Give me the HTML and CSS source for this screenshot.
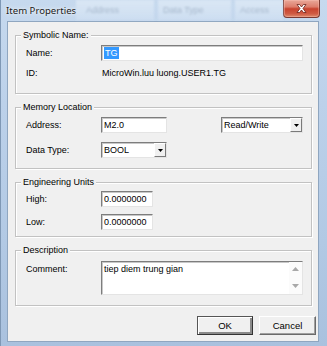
FILE: index.html
```html
<!DOCTYPE html>
<html>
<head>
<meta charset="utf-8">
<title>Item Properties</title>
<link rel="stylesheet" href="styles.css">
</head>
<body>
<div class="window">
  <div class="titlebar">
    <span class="title">Item Properties</span>
    <div class="ghosts">
      <span class="ghost g1">Address</span>
      <span class="ghost g2">Data Type</span>
      <span class="ghost g3">Access</span>
    </div>
    <div class="close">
      <svg width="11" height="9" viewBox="0 0 11 9"><path d="M1 0.5h2.6L5.5 3l1.9-2.5H10L7 4.5l3 4H7.4L5.5 6 3.6 8.5H1l3-4z" fill="#fff" stroke="#6b2219" stroke-width="0.8" stroke-linejoin="round"/></svg>
    </div>
  </div>
  <div class="client">
    <fieldset class="grp grp-sym">
      <legend>Symbolic Name:</legend>
      <div class="row">
        <span class="lbl">Name:</span>
        <div class="edit w-name"><span class="sel">TG</span></div>
      </div>
      <div class="row row-id">
        <span class="lbl">ID:</span>
        <span class="val">MicroWin.luu luong.USER1.TG</span>
      </div>
    </fieldset>

    <fieldset class="grp grp-mem">
      <legend>Memory Location</legend>
      <div class="row">
        <span class="lbl">Address:</span>
        <div class="edit w-addr">M2.0</div>
        <div class="combo w-rw">
          <span class="ctext">Read/Write</span>
          <span class="cbtn"><svg width="5" height="3" viewBox="0 0 5 3"><path d="M0 0h5L2.5 3z" fill="#000"/></svg></span>
        </div>
      </div>
      <div class="row row-dt">
        <span class="lbl">Data Type:</span>
        <div class="combo w-dt">
          <span class="ctext">BOOL</span>
          <span class="cbtn"><svg width="5" height="3" viewBox="0 0 5 3"><path d="M0 0h5L2.5 3z" fill="#000"/></svg></span>
        </div>
      </div>
    </fieldset>

    <fieldset class="grp grp-eng">
      <legend>Engineering Units</legend>
      <div class="row">
        <span class="lbl">High:</span>
        <div class="edit w-num">0.0000000</div>
      </div>
      <div class="row row-low">
        <span class="lbl">Low:</span>
        <div class="edit w-num">0.0000000</div>
      </div>
    </fieldset>

    <fieldset class="grp grp-desc">
      <legend>Description</legend>
      <div class="row row-memo">
        <span class="lbl lbl-memo">Comment:</span>
        <div class="memo">
          <span class="memo-text">tiep diem trung gian</span>
          <div class="vscroll">
            <svg width="7" height="4" viewBox="0 0 7 4"><path d="M0 4L3.5 0 7 4z" fill="#a8a8a8"/></svg>
            <svg width="7" height="4" viewBox="0 0 7 4"><path d="M0 0h7L3.5 4z" fill="#a8a8a8"/></svg>
          </div>
        </div>
      </div>
    </fieldset>

    <div class="buttons">
      <div class="btn btn-default"><span>OK</span></div>
      <div class="btn"><span>Cancel</span></div>
    </div>
  </div>
</div>
</body>
</html>
```

FILE: styles.css
```css
html, body {
  margin: 0;
  padding: 0;
}
body {
  width: 327px;
  height: 346px;
  overflow: hidden;
  background: #b8cde6;
  font-family: "Liberation Sans", Arial, sans-serif;
  font-size: 9px;
  color: #000;
}
.window {
  width: 327px;
  height: 346px;
  box-sizing: border-box;
  display: flex;
  flex-direction: column;
  padding-bottom: 4px;
  background: linear-gradient(180deg, #c6d9ee 0%, #bcd1ea 30%, #b2c9e4 70%, #a9c1de 100%);
  border-left: 1px solid #7f98b5;
}
.titlebar {
  height: 21px;
  flex-shrink: 0;
  display: flex;
  align-items: flex-start;
  padding: 0 7px 0 5px;
}
.title {
  width: 70px;
  flex-shrink: 0;
  font-family: "Noto Sans", "Liberation Sans", sans-serif;
  font-size: 9.6px;
  line-height: 22px;
  color: #1a1a1a;
  white-space: nowrap;
  text-shadow: 0 0 5px rgba(255,255,255,0.9), 0 0 2px rgba(255,255,255,0.8);
}
.ghosts {
  display: flex;
  height: 20px;
  gap: 4px;
}
.ghost {
  display: block;
  height: 20px;
  line-height: 21px;
  font-size: 9px;
  color: rgba(95,115,140,0.4);
  filter: blur(0.9px);
  background: linear-gradient(180deg, rgba(235,243,251,0.55) 0%, rgba(215,229,245,0.5) 100%);
  white-space: nowrap;
  box-sizing: border-box;
}
.g1 { width: 78px; padding-left: 10px; }
.g2 { width: 73px; padding-left: 5px; }
.g3 { width: 48px; padding-left: 5px; }
.close {
  margin-left: auto;
  width: 39px;
  height: 18px;
  box-sizing: border-box;
  border: 1px solid #7a3a32;
  border-top: none;
  border-radius: 0 0 4px 4px;
  background: linear-gradient(180deg, #e9a899 0%, #dd7e6c 40%, #c8432e 52%, #cf5a42 80%, #dd8a6c 100%);
  display: flex;
  align-items: center;
  justify-content: center;
  box-shadow: inset 0 0 0 1px rgba(255,200,190,0.35);
}
.client {
  flex: 1;
  margin: 0 8px 0 6px;
  background: #f0f0f0;
  border: 1px solid #8fa6c0;
  display: flex;
  flex-direction: column;
  padding: 7px 6px 0 7px;
}
.grp {
  margin: 0;
  padding: 0;
  min-width: 0;
  border: 1px solid #c2c2c2;
  box-shadow: 1px 1px 0 #fff, inset 1px 1px 0 #fff;
}
.grp legend {
  margin-left: 5px;
  padding: 0 2px;
  line-height: 13px;
  font-size: 9px;
  background: #f0f0f0;
}
.grp-sym { padding: 3px 0 12px 0; }
.grp-mem { margin-top: 7px; padding: 3px 0 10px 0; }
.grp-eng { margin-top: 7px; padding: 2px 0 6px 0; }
.grp-desc { margin-top: 7px; padding: 4px 0 10px 0; }

.row {
  display: flex;
  align-items: center;
  height: 16px;
  padding-left: 10px;
  padding-right: 8px;
}
.row-id { margin-top: 4px; }
.row-dt { margin-top: 9px; }
.row-low { margin-top: 7px; }
.row-memo { height: 34px; align-items: flex-start; }
.lbl {
  width: 75px;
  flex-shrink: 0;
  white-space: nowrap;
}
.lbl-memo { margin-top: 3px; }
.val { white-space: nowrap; padding-left: 1px; }

.edit {
  box-sizing: border-box;
  height: 16px;
  background: #fff;
  border: 1px solid;
  border-color: #7d7d7d #e4e4e4 #e4e4e4 #7d7d7d;
  box-shadow: inset 1px 1px 0 #c8c8c8;
  padding-left: 2px;
  line-height: 14px;
  white-space: nowrap;
}
.w-name { width: 202px; }
.w-addr { width: 66px; }
.w-num { width: 52px; }
.sel {
  display: inline-block;
  background: #3399ff;
  color: #fff;
  padding: 0 1px;
  line-height: 12px;
}

.combo {
  box-sizing: border-box;
  height: 16px;
  background: #fff;
  border: 1px solid;
  border-color: #7d7d7d #e4e4e4 #e4e4e4 #7d7d7d;
  box-shadow: inset 1px 1px 0 #c8c8c8;
  display: flex;
  align-items: stretch;
}
.w-rw { width: 82px; margin-left: auto; }
.w-dt { width: 66px; }
.ctext {
  flex: 1;
  padding-left: 2px;
  line-height: 14px;
  white-space: nowrap;
}
.cbtn {
  width: 12px;
  box-sizing: border-box;
  background: #f0f0f0;
  border: 1px solid;
  border-color: #ffffff #7a7a7a #7a7a7a #ffffff;
  display: flex;
  align-items: center;
  justify-content: center;
}

.memo {
  box-sizing: border-box;
  width: 202px;
  height: 34px;
  background: #fff;
  border: 1px solid;
  border-color: #7d7d7d #e4e4e4 #e4e4e4 #7d7d7d;
  box-shadow: inset 1px 1px 0 #c8c8c8;
  display: flex;
}
.memo-text {
  flex: 1;
  padding: 1px 0 0 2px;
  line-height: 12px;
  white-space: nowrap;
}
.vscroll {
  width: 13px;
  display: flex;
  flex-direction: column;
  align-items: center;
  justify-content: space-between;
  padding: 5px 0 6px 0;
  background: #fbfbfb;
}

.buttons {
  display: flex;
  justify-content: flex-end;
  gap: 6px;
  margin-top: 10px;
  margin-right: -4px;
}
.btn {
  box-sizing: border-box;
  width: 57px;
  height: 19px;
  background: #f0f0f0;
  border: 1px solid;
  border-color: #ffffff #6a6a6a #6a6a6a #ffffff;
  box-shadow: inset -1px -1px 0 #a0a0a0;
  display: flex;
  align-items: center;
  justify-content: center;
  font-size: 9.5px;
}
.btn-default {
  width: 56px;
  border-color: #555 #333 #333 #555;
  box-shadow: inset 1px 1px 0 #fff, inset -2px -2px 0 #8a8a8a;
}
```
